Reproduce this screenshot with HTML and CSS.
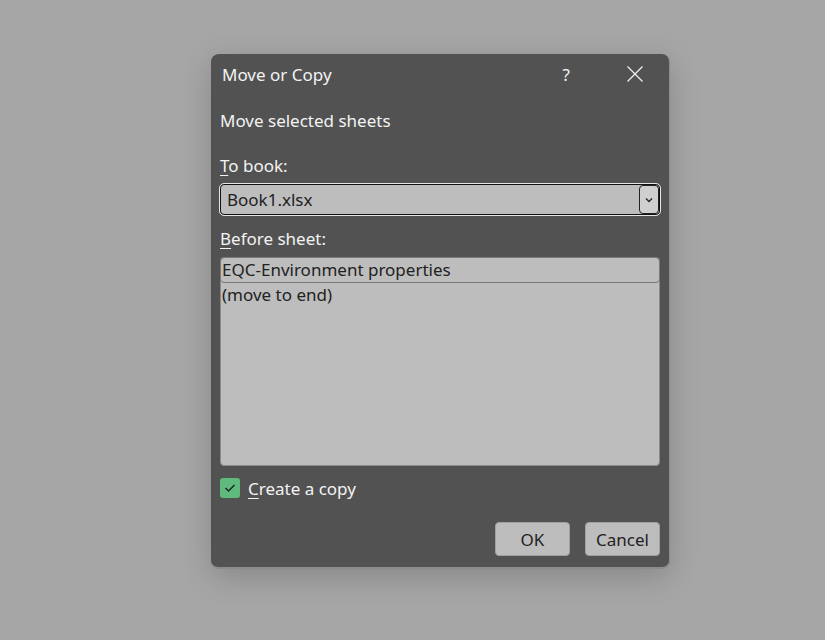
FILE: index.html
```html
<!DOCTYPE html>
<html lang="en">
<head>
    <meta charset="UTF-8">
    <title>Move or Copy</title>
    <link rel="stylesheet" href="styles.css">
</head>
<body>

    <!-- Move or Copy dialog -->
    <div class="dialog">
        <div class="titlebar">
            <span class="title">Move or Copy</span>
            <span class="help">?</span>
            <span class="close">
                <svg width="16" height="16" viewBox="0 0 16 16"><path d="M0.5 0.5 L15.5 15.5 M15.5 0.5 L0.5 15.5" stroke="#f0f0f0" stroke-width="1.3" fill="none"/></svg>
            </span>
        </div>

        <div class="content">
            <div class="intro">Move selected sheets</div>

            <div class="label book-label"><u>T</u>o book:</div>
            <div class="select">
                <span>Book1.xlsx</span>
                <span class="drop">
                    <svg width="10" height="6" viewBox="0 0 10 6"><path d="M2 1.5 L5 4.5 L8 1.5" stroke="#222" stroke-width="1.3" fill="none"/></svg>
                </span>
            </div>

            <div class="label sheet-label"><u>B</u>efore sheet:</div>
            <div class="listbox">
                <div class="item selected">EQC-Environment properties</div>
                <div class="item">(move to end)</div>
            </div>

            <div class="check-row">
                <span class="checkbox">
                    <svg width="12" height="10" viewBox="0 0 12 10"><path d="M1.5 5 L4.5 8 L10.5 2" stroke="#1e2a22" stroke-width="1.5" fill="none"/></svg>
                </span>
                <span><u>C</u>reate a copy</span>
            </div>

            <div class="buttons">
                <button class="btn">OK</button>
                <button class="btn">Cancel</button>
            </div>
        </div>
    </div>

</body>
</html>
```

FILE: styles.css
```css
body {
    margin: 0;
    width: 825px;
    height: 640px;
    background-color: #a6a6a6;
    font-family: "Noto Sans", "Open Sans", sans-serif;
    overflow: hidden;
}
.dialog {
    margin: 54px 0 0 211px;
    width: 459px;
    height: 515px;
    box-sizing: border-box;
    background: #525252;
    border-radius: 8px;
    border-right: 1px solid #8c8c8c;
    border-bottom: 2px solid #8c8c8c;
    box-shadow: 0 8px 30px rgba(0, 0, 0, 0.18);
    color: #f2f2f2;
}
.titlebar {
    display: flex;
    align-items: center;
    height: 40px;
    padding-left: 11px;
}
.title {
    flex: 1;
    font-size: 17px;
}
.help {
    font-size: 17px;
    margin-right: 57px;
}
.close {
    display: flex;
    margin-right: 26px;
}
.content {
    padding: 0 9px 0 9px;
}
.intro {
    font-size: 17px;
    margin-top: 15px;
    height: 24px;
}
.label {
    font-size: 17px;
    height: 24px;
}
.book-label {
    margin-top: 21px;
}
.sheet-label {
    margin-top: 12px;
}
.label u, .check-row u {
    text-decoration-thickness: 1px;
    text-underline-offset: 3px;
}
.select {
    margin-top: 6px;
    height: 31px;
    box-sizing: border-box;
    background: #bdbdbd;
    border: 1px solid #111;
    outline: 1px solid #e6e6e6;
    border-radius: 4px;
    display: flex;
    align-items: center;
    justify-content: space-between;
    color: #222;
    font-size: 17px;
    padding-left: 6px;
}
.drop {
    width: 20px;
    height: 29px;
    box-sizing: border-box;
    background: #cfcfcf;
    border: 1px solid #222;
    border-radius: 4px;
    display: flex;
    align-items: center;
    justify-content: center;
}
.listbox {
    margin-top: 6px;
    height: 209px;
    box-sizing: border-box;
    background: #bdbdbd;
    border: 1px solid #8a8a8a;
    border-radius: 4px;
    color: #222;
    font-size: 17px;
}
.item {
    height: 26px;
    line-height: 24px;
    box-sizing: border-box;
    padding-left: 1px;
}
.item.selected {
    border: 1px solid #7a7a7a;
    border-radius: 4px;
    margin: -1px -1px 0 -1px;
    padding-left: 1px;
}
.check-row {
    display: flex;
    align-items: center;
    height: 20px;
    margin-top: 12px;
    font-size: 17px;
}
.checkbox {
    width: 20px;
    height: 20px;
    background: #5fba7d;
    border-radius: 3px;
    display: flex;
    align-items: center;
    justify-content: center;
    margin-right: 8px;
}
.buttons {
    display: flex;
    justify-content: flex-end;
    gap: 15px;
    margin-top: 24px;
}
.btn {
    width: 75px;
    height: 34px;
    background: #bdbdbd;
    border: 1px solid #a0a0a0;
    border-radius: 4px;
    color: #222;
    font-family: "Noto Sans", "Open Sans", sans-serif;
    font-size: 17px;
    padding: 0;
}
```
